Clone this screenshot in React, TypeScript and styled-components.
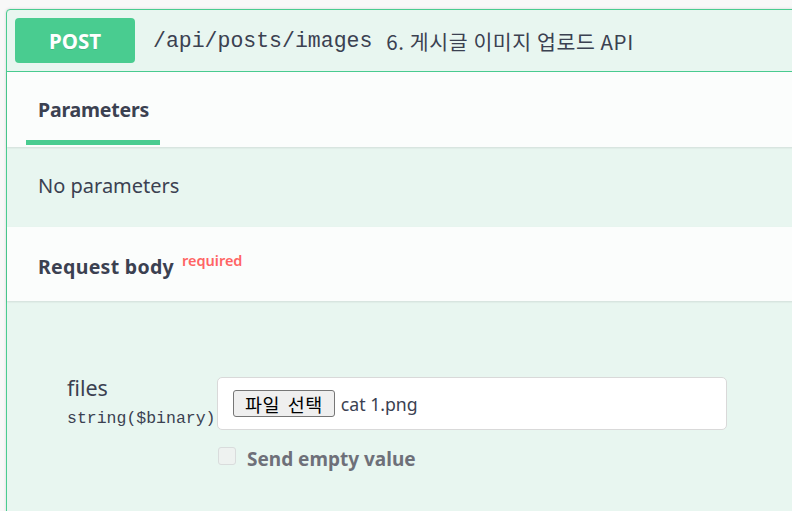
import React from "react";
import styled, { createGlobalStyle } from "styled-components";

const Global = createGlobalStyle`
  html, body { margin: 0; padding: 0; background: #f8f8f8; overflow: hidden; }
  body { font-family: "Noto Sans CJK KR", "Noto Sans", sans-serif; color: #3b4151; }
`;

const Page = styled.div`
  padding: 9px 0 0 6px;
  height: 511px;
  box-sizing: border-box;
`;

const Opblock = styled.div`
  width: 820px;
  min-height: 520px;
  border: 1px solid #49cc90;
  border-radius: 4px;
  background: #e8f6f0;
  box-shadow: 0 0 3px rgba(0, 0, 0, 0.15);
`;

const Summary = styled.div`
  display: flex;
  align-items: center;
  height: 61px;
  padding: 0 8px;
  border-bottom: 1px solid #49cc90;
`;

const Method = styled.div`
  width: 120px;
  height: 45px;
  border-radius: 4px;
  background: #49cc90;
  color: #fff;
  font-family: "Noto Sans", sans-serif;
  font-weight: 700;
  font-size: 20.5px;
  display: flex;
  align-items: center;
  justify-content: center;
  text-shadow: 0 1px 0 rgba(0, 0, 0, 0.1);
`;

const Path = styled.span`
  margin-left: 18px;
  font-family: "Liberation Mono", monospace;
  font-size: 21.5px;
  color: #3b4151;
`;

const Desc = styled.span`
  margin-left: 14px;
  font-family: "Noto Sans CJK KR", sans-serif;
  font-size: 20.5px;
  letter-spacing: 0.6px;
  color: #3b4151;
`;

const SectionHeader = styled.div<{ $h: number }>`
  display: flex;
  align-items: stretch;
  height: ${(p) => p.$h}px;
  padding: 0 19px;
  background: rgba(255, 255, 255, 0.8);
  box-shadow: 0 1px 2px rgba(0, 0, 0, 0.1);
  position: relative;
`;

const Tab = styled.div`
  display: flex;
  align-items: center;
  padding: 6px 11px 0 12px;
  font-family: "Noto Sans", sans-serif;
  font-weight: 700;
  font-size: 19.5px;
  letter-spacing: -0.2px;
  color: #3b4151;
  border-bottom: 5px solid #49cc90;
  box-sizing: border-box;
  margin-bottom: 2px;
`;

const Title = styled.div`
  display: flex;
  align-items: center;
  padding: 5px 12px 0;
  font-family: "Noto Sans", sans-serif;
  font-weight: 700;
  font-size: 19.5px;
  letter-spacing: 0.3px;
  color: #3b4151;
`;

const Required = styled.sup`
  font-size: 14.5px;
  font-weight: 600;
  letter-spacing: 0;
  color: #ff6464;
  margin-left: 8px;
  position: relative;
  top: -7px;
`;

const Empty = styled.div`
  height: 80px;
  display: flex;
  align-items: center;
  padding: 0 31px 4px;
  font-family: "Noto Sans", sans-serif;
  font-size: 20px;
  color: #3b4151;
  box-sizing: border-box;
`;

const Body = styled.div`
  padding: 76px 0 0 60px;
  display: grid;
  grid-template-columns: 150px 510px;
  row-gap: 17px;
`;

const Label = styled.div`
  display: flex;
  flex-direction: column;
`;

const Name = styled.span`
  font-family: "Noto Sans", sans-serif;
  font-size: 21.5px;
  line-height: 22px;
  color: #3b4151;
`;

const Type = styled.span`
  margin-top: 10px;
  font-family: "Liberation Mono", monospace;
  font-size: 16.5px;
  color: #3b4151;
`;

const FileBox = styled.div`
  height: 53px;
  box-sizing: border-box;
  background: #fff;
  border: 1px solid #d9d9d9;
  border-radius: 5px;
  display: flex;
  align-items: center;
  padding: 0 15px;
`;

const FileButton = styled.span`
  height: 27px;
  box-sizing: border-box;
  padding: 0 11px;
  background: #efefef;
  border: 1px solid #767676;
  border-radius: 3px;
  display: inline-flex;
  align-items: center;
  font-family: "Noto Sans CJK KR", sans-serif;
  font-size: 18.5px;
  letter-spacing: 0.5px;
  word-spacing: 3px;
  color: #000;
`;

const FileName = styled.span`
  margin-left: 6px;
  font-family: "Noto Sans", sans-serif;
  font-size: 17.7px;
  color: #3b4151;
`;

const CheckRow = styled.label`
  grid-column: 2;
  display: flex;
  align-items: flex-start;
  gap: 11px;
  font-family: "Noto Sans", sans-serif;
  font-weight: 700;
  font-size: 19px;
  line-height: 24px;
  color: #6e7079;
`;

const Box = styled.span`
  width: 18px;
  height: 18px;
  box-sizing: border-box;
  border: 1px solid #d9dcdc;
  border-radius: 3px;
  background: #eef2f0;
  margin-left: 1px;
`;

const CheckText = styled.span``;

export default function App() {
  return (
    <>
      <Global />
      <Page>
        <Opblock>
          <Summary>
            <Method>POST</Method>
            <Path>/api/posts/images</Path>
            <Desc>6. 게시글 이미지 업로드 API</Desc>
          </Summary>
          <SectionHeader $h={75}>
            <Tab>Parameters</Tab>
          </SectionHeader>
          <Empty>No parameters</Empty>
          <SectionHeader $h={74}>
            <Title>
              Request body<Required>required</Required>
            </Title>
          </SectionHeader>
          <Body>
            <Label>
              <Name>files</Name>
              <Type>string($binary)</Type>
            </Label>
            <FileBox>
              <FileButton>파일 선택</FileButton>
              <FileName>cat 1.png</FileName>
            </FileBox>
            <CheckRow>
              <Box />
              <CheckText>Send empty value</CheckText>
            </CheckRow>
          </Body>
        </Opblock>
      </Page>
    </>
  );
}
